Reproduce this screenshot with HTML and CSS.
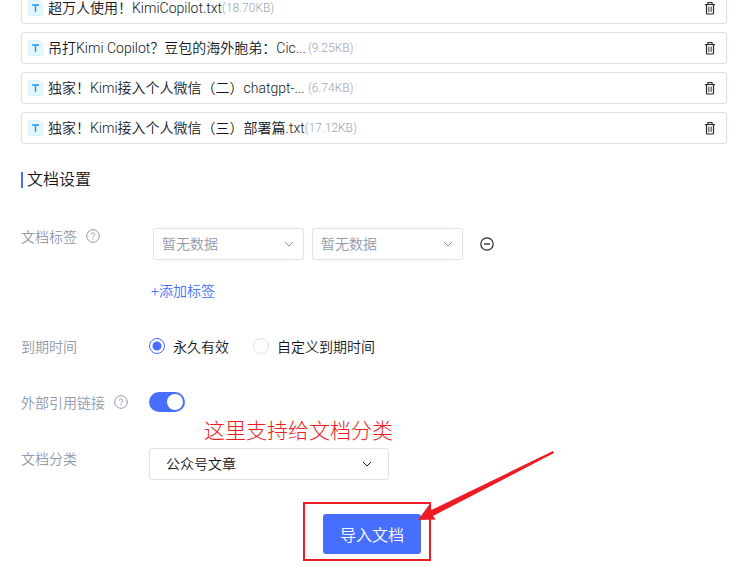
FILE: index.html
```html
<!DOCTYPE html>
<html lang="zh-CN">
<head>
  <meta charset="UTF-8">
  <meta name="viewport" content="width=device-width, initial-scale=1.0">
  <title>导入文档</title>
  <link rel="stylesheet" href="styles.css">
</head>
<body>
  <!-- Shared icons -->
  <svg class="sprite" aria-hidden="true">
    <symbol id="icon-txt" viewBox="0 0 16 16">
      <path d="M2.500.5h9.500l3 3v10a2 2 0 0 1-2 2H2.500a2 2 0 0 1-2-2v-11a2 2 0 0 1 2-2z" fill="#e8f7ff" stroke="#d6f0ff"/>
      <path d="M4 5h7M7.500 5v7" fill="none" stroke="#1e96ff" stroke-width="1.500"/>
    </symbol>
    <symbol id="icon-trash" viewBox="0 0 12 14">
      <path d="M1 3.500h10M4 3V1.500h4V3M2.500 4v8q0 1 1 1h5q1 0 1-1V4" fill="none" stroke="#25262e" stroke-width="1.200"/>
      <path d="M4.500 5.500v5.500M6 5.500v5.500M7.500 5.500v5.500" fill="none" stroke="#55575f" stroke-width=".8"/>
    </symbol>
    <symbol id="icon-help" viewBox="0 0 14 14">
      <circle cx="7" cy="7" r="6.300" fill="none" stroke="#9298a8"/>
      <path d="M5.300 5.600a1.700 1.700 0 1 1 2.600 1.400q-.9.500-.9 1.400M7 9.400v1.200" fill="none" stroke="#9298a8"/>
    </symbol>
    <symbol id="icon-minus" viewBox="0 0 14 14">
      <circle cx="7" cy="7" r="6.200" fill="none" stroke="#25262e" stroke-width="1.200"/>
      <path d="M4 7h6" stroke="#25262e" stroke-width="1.300"/>
    </symbol>
    <symbol id="icon-down" viewBox="0 0 10 10">
      <path d="M1 3l4 4 4-4" fill="none" stroke="currentColor"/>
    </symbol>
  </svg>

  <main class="page">
    <ul class="file-list">
      <li class="file">
        <svg class="file-icon"><use href="#icon-txt"/></svg>
        <span class="file-name">超万人使用！KimiCopilot.txt</span>
        <span class="file-size">(18.70KB)</span>
        <button class="icon-button file-delete" type="button" aria-label="删除"><svg class="trash"><use href="#icon-trash"/></svg></button>
      </li>
      <li class="file">
        <svg class="file-icon"><use href="#icon-txt"/></svg>
        <span class="file-name file-name-cut">吊打Kimi Copilot？豆包的海外胞弟：Cic...</span>
        <span class="file-size">(9.25KB)</span>
        <button class="icon-button file-delete" type="button" aria-label="删除"><svg class="trash"><use href="#icon-trash"/></svg></button>
      </li>
      <li class="file">
        <svg class="file-icon"><use href="#icon-txt"/></svg>
        <span class="file-name file-name-cut">独家！Kimi接入个人微信（二）chatgpt-...</span>
        <span class="file-size">(6.74KB)</span>
        <button class="icon-button file-delete" type="button" aria-label="删除"><svg class="trash"><use href="#icon-trash"/></svg></button>
      </li>
      <li class="file">
        <svg class="file-icon"><use href="#icon-txt"/></svg>
        <span class="file-name">独家！Kimi接入个人微信（三）部署篇.txt</span>
        <span class="file-size">(17.12KB)</span>
        <button class="icon-button file-delete" type="button" aria-label="删除"><svg class="trash"><use href="#icon-trash"/></svg></button>
      </li>
    </ul>

    <h2 class="section-title">文档设置</h2>

    <form class="settings">
      <div class="row">
        <label class="row-label" for="tag-key">文档标签 <svg class="help"><use href="#icon-help"/></svg></label>
        <div class="tags">
          <div class="tag-line">
            <div class="select-box">
              <select class="select" id="tag-key"><option>暂无数据</option></select>
              <svg class="arrow"><use href="#icon-down"/></svg>
            </div>
            <div class="select-box">
              <select class="select" aria-label="标签值"><option>暂无数据</option></select>
              <svg class="arrow"><use href="#icon-down"/></svg>
            </div>
            <button class="icon-button remove-tag" type="button" aria-label="移除标签"><svg class="minus"><use href="#icon-minus"/></svg></button>
          </div>
          <a class="add-tag" href="#">+添加标签</a>
        </div>
      </div>

      <div class="row">
        <span class="row-label" id="expire-label">到期时间</span>
        <div class="radios" role="radiogroup" aria-labelledby="expire-label">
          <label class="radio"><input class="radio-input" type="radio" name="expire" checked>永久有效</label>
          <label class="radio"><input class="radio-input" type="radio" name="expire">自定义到期时间</label>
        </div>
      </div>

      <div class="row">
        <label class="row-label" for="link-switch">外部引用链接 <svg class="help"><use href="#icon-help"/></svg></label>
        <input class="switch" type="checkbox" role="switch" id="link-switch" checked>
      </div>

      <div class="row">
        <label class="row-label" for="category">文档分类</label>
        <div class="select-box category">
          <select class="select category-select" id="category"><option>公众号文章</option></select>
          <svg class="arrow category-arrow"><use href="#icon-down"/></svg>
          <span class="note">这里支持给文档分类</span>
        </div>
      </div>

      <div class="footer">
        <div class="submit-box">
          <button class="submit" type="button">导入文档</button>
          <span class="mark"></span>
          <svg class="pointer" viewBox="0 0 136 70" aria-hidden="true">
            <path d="M0 70L11 55L13.500 60L135 1L136 3L15 66L18 69.500z" fill="#ed1c24"/>
          </svg>
        </div>
      </div>
    </form>
  </main>
</body>
</html>
```
FILE: styles.css
```css
* {
  box-sizing: border-box;
}

body {
  margin: 0;
  font-family: Roboto, "Noto Sans CJK SC", sans-serif;
  font-size: 14px;
  font-weight: 350;
  color: #14151c;
  background: #fff;
}

.sprite {
  display: none;
}

.page {
  padding: 0 23px 0 21px;
}

/* The list is scrolled a little past its first row */
.file-list {
  display: flex;
  flex-direction: column;
  gap: 8px;
  list-style: none;
  margin: -8px 0 0;
  padding: 0;
}

.file {
  display: flex;
  align-items: center;
  height: 32px;
  padding: 0 10px 0 6px;
  border: 1px solid #dfe1e8;
  border-radius: 3px;
}

.file-icon {
  width: 16px;
  height: 16px;
  margin-right: 4px;
}

.file-name,
.file-size {
  line-height: 20px;
  white-space: nowrap;
}

.file-name-cut {
  width: 260px;
}

.file-size {
  font-size: 12px;
  color: #a0a4b3;
}

.icon-button {
  display: flex;
  padding: 0;
  border: none;
  background: none;
  cursor: pointer;
}

.file-delete {
  margin-left: auto;
}

.trash {
  width: 12px;
  height: 14px;
}

.section-title {
  display: flex;
  align-items: center;
  gap: 4px;
  margin: 24px 0 28px;
  font-size: 16px;
  font-weight: 350;
  line-height: 24px;
}

.section-title::before {
  content: "";
  width: 2px;
  height: 16px;
  background: #476fff;
}

.settings {
  display: flex;
  flex-direction: column;
  gap: 24px;
}

.row {
  display: flex;
}

.row-label {
  display: flex;
  align-items: center;
  gap: 9px;
  width: 128px;
  height: 32px;
  color: #9298a8;
}

.help,
.minus {
  width: 14px;
  height: 14px;
}

.tags {
  padding: 8px 0 0 4px;
}

.tag-line {
  display: flex;
  gap: 8px;
}

.select-box {
  position: relative;
  width: 151px;
  color: #9298a8;
}

.select {
  appearance: none;
  width: 100%;
  height: 32px;
  padding: 0 28px 0 8px;
  border: 1px solid #dfe1e8;
  border-radius: 3px;
  background: #fff;
  color: inherit;
  font: inherit;
}

.arrow {
  position: absolute;
  right: 10px;
  top: 11px;
  width: 10px;
  height: 10px;
  pointer-events: none;
}

.remove-tag {
  align-items: center;
  margin-left: 9px;
}

.add-tag {
  display: block;
  width: max-content;
  margin: 16px 0 0 -2px;
  line-height: 30px;
  color: #476fff;
  text-decoration: none;
}

.radios {
  display: flex;
  gap: 24px;
}

.radio {
  display: flex;
  align-items: center;
  gap: 8px;
}

.radio-input {
  appearance: none;
  width: 16px;
  height: 16px;
  margin: 0;
  border: 1px solid #dfe1e8;
  border-radius: 50%;
}

.radio-input:checked {
  border-color: #476fff;
  background: radial-gradient(circle, #476fff 4px, #fff 5px);
}

.switch {
  appearance: none;
  display: flex;
  align-items: center;
  width: 36px;
  height: 20px;
  margin: 6px 0;
  padding: 0 2px;
  border-radius: 10px;
  background: #c9ccd6;
}

.switch::before {
  content: "";
  width: 16px;
  height: 16px;
  border-radius: 50%;
  background: #fff;
}

.switch:checked {
  justify-content: flex-end;
  background: #476fff;
}

.category {
  width: 240px;
  margin-top: 6px;
  color: #14151c;
}

.category-select {
  padding-left: 16px;
}

.category-arrow {
  right: 17px;
}

/* Red hand-drawn notes */
.note {
  position: absolute;
  left: 55px;
  bottom: 34px;
  font-size: 21px;
  font-weight: 300;
  line-height: 30px;
  white-space: nowrap;
  color: #ed1c24;
}

.footer {
  display: flex;
  justify-content: center;
  padding: 10px 4px 12px 0;
}

.submit-box {
  position: relative;
}

.submit {
  height: 40px;
  padding: 0 17px;
  border: none;
  border-radius: 3px;
  background: #476fff;
  color: #fff;
  font: inherit;
  font-size: 16px;
  cursor: pointer;
}

.mark {
  position: absolute;
  inset: -12px -10px -7px -20px;
  border: 2px solid #ed1c24;
  pointer-events: none;
}

.pointer {
  position: absolute;
  left: 95px;
  top: -64px;
  width: 136px;
  height: 70px;
  pointer-events: none;
}
```
